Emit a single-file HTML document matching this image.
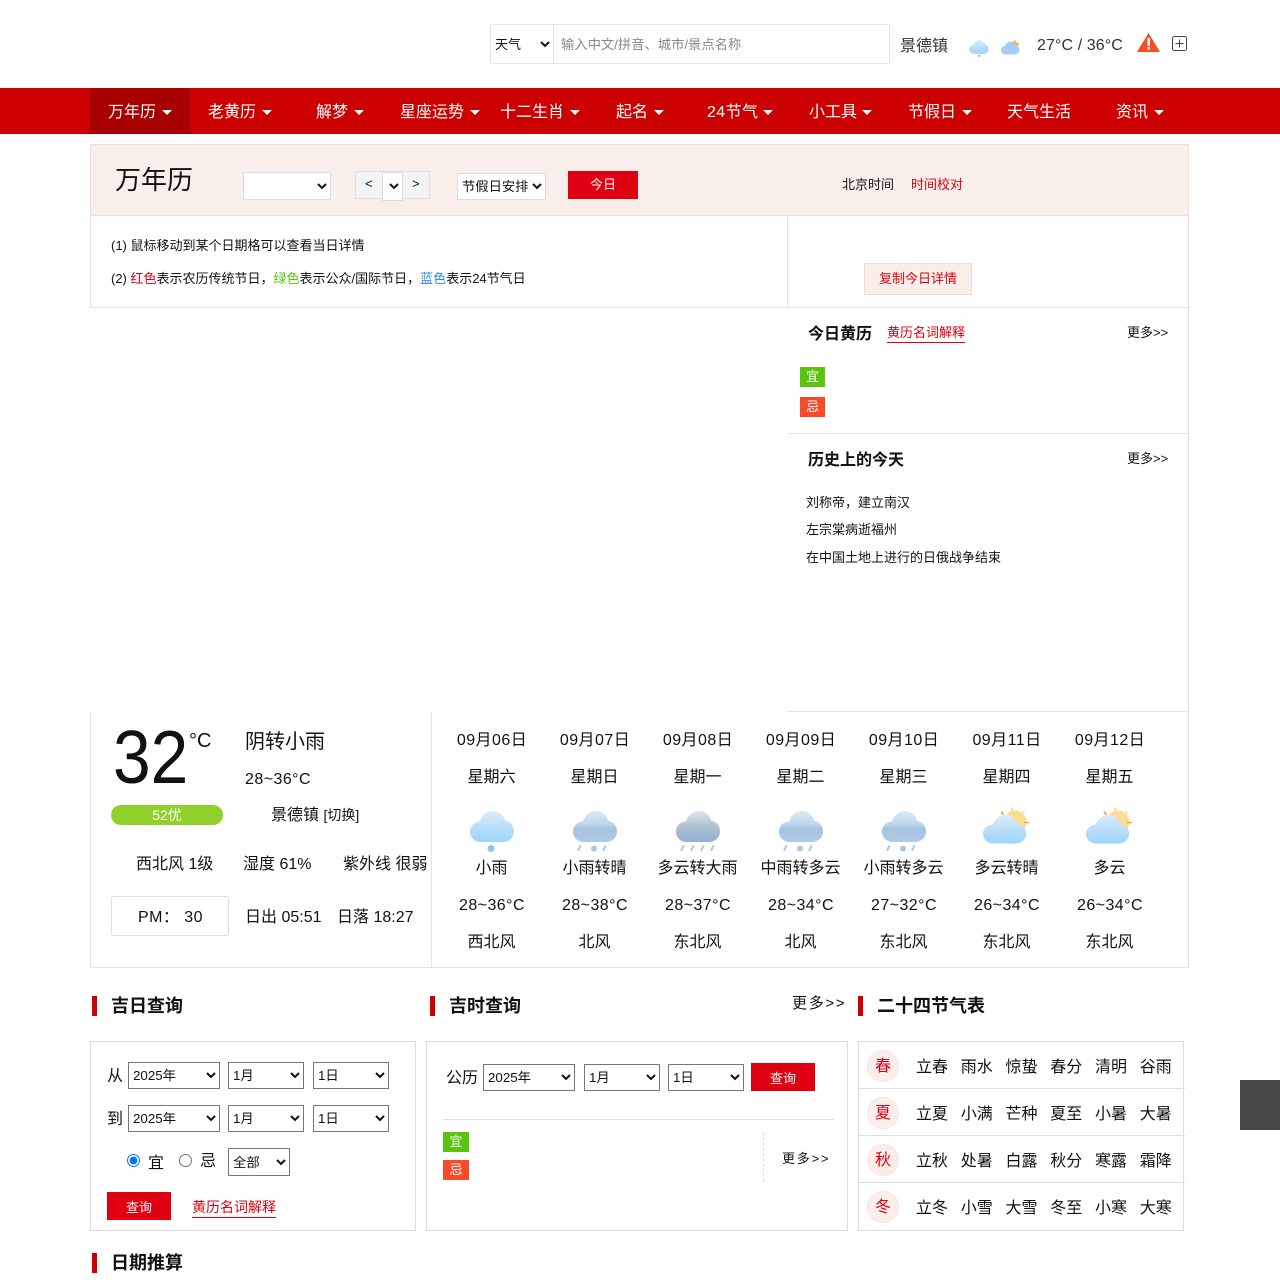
<!DOCTYPE html>
<html lang="zh-CN"><head><meta charset="utf-8"><title>万年历</title>
<style>
html,body{margin:0;padding:0;background:#fff}
body{position:relative;width:1280px;height:1280px;overflow:hidden;font-family:"WenQuanYi Zen Hei","Liberation Sans","Noto Sans CJK SC",sans-serif;color:#111;font-size:16px}
.t{position:absolute;white-space:nowrap;line-height:20px}
.b{position:absolute;box-sizing:border-box}
.c{position:absolute;white-space:nowrap;line-height:20px;text-align:center;width:103px}
.ls{letter-spacing:.45px}
.c.ls{text-indent:1px}
.n{color:#fff;top:104px;line-height:18px}
.car{position:absolute;top:110px;width:0;height:0;border-left:5px solid transparent;border-right:5px solid transparent;border-top:5px solid #fff}
.s13{font-size:13px}
select{position:absolute;box-sizing:border-box;font-family:"Liberation Sans","WenQuanYi Zen Hei",sans-serif;font-size:13.33px;color:#111;background:#fff;margin:0}
.h{font-weight:bold;font-size:18px}
.bar{position:absolute;width:5px;height:20px;background:#cc0000}
.red{position:absolute;background:#df0011;color:#fff;text-align:center;font-size:13px}
.tag{position:absolute;color:#fff;text-align:center;font-size:13px;line-height:20px;height:20px}
.g{background:#5ac40f}.o{background:#fa4a2c}
.circ{position:absolute;left:867px;width:32px;height:32px;box-sizing:border-box;border-radius:50%;background:#faeeeb;border:1px dotted #f3d8d8;color:#df0011;text-align:center;line-height:32px;font-size:16px}
.row{word-spacing:8.3px}
svg{position:absolute}
</style></head><body>
<svg width="0" height="0" style="left:0;top:0"><defs>
<linearGradient id="a" x1="0" y1="0" x2="0" y2="1"><stop offset="0" stop-color="#dcebf8"/><stop offset=".6" stop-color="#b5dcfb"/><stop offset="1" stop-color="#9ad6ff"/></linearGradient>
<linearGradient id="m" x1="0" y1="0" x2="0" y2="1"><stop offset="0" stop-color="#dce9f5"/><stop offset=".45" stop-color="#b9d6f0"/><stop offset=".55" stop-color="#a9c3dc"/><stop offset="1" stop-color="#abcbe8"/></linearGradient>
<linearGradient id="d" x1="0" y1="0" x2="0" y2="1"><stop offset="0" stop-color="#dde7f1"/><stop offset=".5" stop-color="#b0bfd0"/><stop offset="1" stop-color="#8fb0d6"/></linearGradient>
<path id="cl" d="M11 31C4 31 0 26 0 20.500C0 14.500 5 10.500 10 10.500C12 4 17 0 23 0C29 0 33.500 4 35 9.500C40 10.500 44 14.500 44 20.500C44 26.500 39 31 33 31Z"/>
<g id="drop3" fill="#aac8e6"><path d="M6.500 34.500q2-1 2 .5l-2.500 5q-2 .5-1.500-1.500Z"/><circle cx="21" cy="37.500" r="3"/><path d="M31.500 34.500q2-1 2 .5l-2.500 5q-2 .5-1.500-1.500Z"/></g>
<g id="sunny">
<circle cx="32" cy="17" r="11.500" fill="#fbdc94"/>
<path d="M28.800 2.500l.8 3.500" stroke="#fbd98c" stroke-width="2" fill="none"/>
<path d="M18 7l2.500 2.500" stroke="#f9a93c" stroke-width="2" fill="none"/>
<path d="M41 6.500l-2.500 3" stroke="#fbe0a0" stroke-width="2.500" fill="none"/>
<path d="M41 17.500h5" stroke="#f9a93c" stroke-width="1.500" fill="none"/>
<use href="#cl" transform="translate(0 10) scale(.98 .92)" fill="url(#a)"/>
</g>
</defs></svg>

<!-- header search -->
<div class="b" style="left:490px;top:24px;width:400px;height:40px;border:1px solid #e6e6e6"></div>
<div class="b" style="left:553px;top:24px;width:1px;height:40px;background:#e6e6e6"></div>
<select style="left:491px;top:25px;width:62px;height:38px;border:0;font-size:13px;background:transparent"><option>天气</option></select>
<div class="t" style="left:561px;top:35px;color:#888;font-size:13.300px">输入中文/拼音、城市/景点名称</div>
<div class="t" style="left:900px;top:37px;color:#333">景德镇</div>
<svg style="left:969px;top:40px" width="20" height="17" viewBox="0 0 44 38"><use href="#cl" fill="url(#a)"/><circle cx="22" cy="35" r="3" fill="#9ccbed"/></svg>
<svg style="left:1001px;top:39px" width="20" height="16" viewBox="0 -6 48 38"><path d="M24 3l10-7 3 6 7 1-3 9Z" fill="#f8b455"/><use href="#cl" fill="#a3cdf2"/></svg>
<div class="t" style="left:1037px;top:36px;color:#333;letter-spacing:.1px">27°C / 36°C</div>
<svg style="left:1137px;top:33px" width="23" height="19" viewBox="0 0 23 19"><path d="M11.500 0L23 19H0Z" fill="#f64e22"/><rect x="10.500" y="5" width="2.500" height="8" fill="#fff"/><rect x="10.500" y="14" width="2.500" height="2.500" fill="#fff"/></svg>
<svg style="left:1172px;top:36px" width="15" height="15" viewBox="0 0 15 15"><rect x=".5" y=".5" width="14" height="14" rx="2" fill="none" stroke="#444"/><path d="M3.500 7.500h8M7.500 3.500v8" stroke="#444" fill="none"/></svg>

<!-- nav -->
<div class="b" style="left:0;top:88px;width:1280px;height:46px;background:#cc0000"></div>
<div class="b" style="left:90px;top:88px;width:100px;height:46px;background:#a80000"></div>
<div class="t n" style="left:108px">万年历</div><i class="car" style="left:162px"></i>
<div class="t n" style="left:208px">老黄历</div><i class="car" style="left:262px"></i>
<div class="t n" style="left:316px">解梦</div><i class="car" style="left:354px"></i>
<div class="t n" style="left:400px">星座运势</div><i class="car" style="left:470px"></i>
<div class="t n" style="left:500px">十二生肖</div><i class="car" style="left:570px"></i>
<div class="t n" style="left:616px">起名</div><i class="car" style="left:654px"></i>
<div class="t n" style="left:707px;letter-spacing:.4px">24节气</div><i class="car" style="left:763px"></i>
<div class="t n" style="left:809px">小工具</div><i class="car" style="left:862px"></i>
<div class="t n" style="left:908px">节假日</div><i class="car" style="left:962px"></i>
<div class="t n" style="left:1007px">天气生活</div>
<div class="t n" style="left:1116px">资讯</div><i class="car" style="left:1154px"></i>

<!-- calendar head -->
<div class="b" style="left:90px;top:144px;width:1099px;height:72px;background:#faeeeb;border:1px solid #f3dcdc"></div>
<div class="t" style="left:115px;top:165px;font-size:26px;line-height:30px">万年历</div>
<select style="left:243px;top:172px;width:88px;height:28px;border:1px solid #ddd;border-radius:0"><option></option></select>
<div class="b" style="left:355px;top:171px;width:75px;height:28px;background:#f2f3f5;border:1px solid #e0e0e0"></div>
<div class="t s13" style="left:365px;top:174px">&lt;</div><div class="t s13" style="left:412px;top:174px">&gt;</div>
<select style="left:382px;top:172px;width:21px;height:29px;border:1px solid #ddd;border-radius:0;padding:0"><option></option></select>
<select style="left:457px;top:173px;width:89px;height:27px;border:1px solid #ddd;border-radius:0;font-size:13.300px"><option>节假日安排</option></select>
<div class="red" style="left:568px;top:171px;width:70px;height:28px;line-height:27px">今日</div>
<div class="t s13" style="left:842px;top:175px">北京时间</div>
<div class="t s13" style="left:911px;top:175px;color:#df0011">时间校对</div>

<!-- borders main -->
<div class="b" style="left:90px;top:216px;width:1px;height:92px;background:#f3dcdc"></div>
<div class="b" style="left:787px;top:216px;width:1px;height:92px;background:#f3dcdc"></div>
<div class="b" style="left:1188px;top:216px;width:1px;height:752px;background:#f3dcdc"></div>
<div class="b" style="left:90px;top:307px;width:1099px;height:1px;background:#f3dcdc"></div>

<div class="t s13" style="left:111px;top:236px">(1) 鼠标移动到某个日期格可以查看当日详情</div>
<div class="t s13" style="left:111px;top:269px">(2) <span style="color:#df0011">红色</span>表示农历传统节日，<span style="color:#5ac40f">绿色</span>表示公众/国际节日，<span style="color:#2e8be6">蓝色</span>表示24节气日</div>
<div class="b s13" style="left:864px;top:263px;width:108px;height:32px;background:#faeeeb;border:1px solid #f5d9d9;color:#df0011;text-align:center;line-height:29px">复制今日详情</div>

<!-- almanac -->
<div class="t" style="left:808px;top:325px;font-weight:bold;font-size:16px">今日黄历</div>
<div class="t s13" style="left:887px;top:323px;color:#df0011;border-bottom:1px solid #df0011;line-height:19px">黄历名词解释</div>
<div class="t s13" style="left:1127px;top:323px">更多&gt;&gt;</div>
<div class="tag g" style="left:800px;top:367px;width:25px">宜</div>
<div class="tag o" style="left:800px;top:397px;width:25px">忌</div>
<div class="b" style="left:788px;top:433px;width:400px;height:1px;background:#f3dcdc"></div>
<div class="t" style="left:808px;top:451px;font-weight:bold;font-size:16px">历史上的今天</div>
<div class="t s13" style="left:1127px;top:449px">更多&gt;&gt;</div>
<div class="t" style="left:806px;top:493px;font-size:13px">刘称帝，建立南汉</div>
<div class="t" style="left:806px;top:520px;font-size:13px">左宗棠病逝福州</div>
<div class="t" style="left:806px;top:548px;font-size:13px">在中国土地上进行的日俄战争结束</div>

<!-- weather -->
<div class="b" style="left:788px;top:711px;width:401px;height:1px;background:#f3dcdc"></div>
<div class="b" style="left:90px;top:712px;width:1px;height:256px;background:#f3dcdc"></div>
<div class="b" style="left:431px;top:712px;width:1px;height:256px;background:#f3dcdc"></div>
<div class="b" style="left:90px;top:967px;width:1099px;height:1px;background:#f3dcdc"></div>

<div class="t" style="left:113px;top:720px;font-size:72px;line-height:72px;transform:scale(.94,1.05);transform-origin:0 0">32</div>
<div class="t" style="left:189px;top:731px;font-size:20px">°C</div>
<div class="t" style="left:245px;top:732px;font-size:20px">阴转小雨</div>
<div class="t ls" style="left:245px;top:770px">28~36°C</div>
<div class="b" style="left:111px;top:805px;width:112px;height:20px;border-radius:10px;background:#8fd12a;color:#fff;text-align:center;font-size:14px;line-height:20px">52优</div>
<div class="t" style="left:271px;top:805px">景德镇 <span style="font-size:14px">[切换]</span></div>
<div class="t" style="left:136px;top:855px">西北风 1级</div>
<div class="t" style="left:243px;top:855px">湿度 61%</div>
<div class="t" style="left:343px;top:855px">紫外线 很弱</div>
<div class="b" style="left:111px;top:896px;width:118px;height:40px;border:1px solid #ddd;border-radius:3px"></div>
<div class="t ls" style="left:138px;top:908px">PM： 30</div>
<div class="t" style="left:245px;top:908px">日出 05:51</div>
<div class="t" style="left:337px;top:908px">日落 18:27</div>

<div class="c ls" style="left:440px;top:731px">09月06日</div><div class="c ls" style="left:543px;top:731px">09月07日</div><div class="c ls" style="left:646px;top:731px">09月08日</div><div class="c ls" style="left:749px;top:731px">09月09日</div><div class="c ls" style="left:852px;top:731px">09月10日</div><div class="c ls" style="left:955px;top:731px">09月11日</div><div class="c ls" style="left:1058px;top:731px">09月12日</div>
<div class="c" style="left:440px;top:768px">星期六</div><div class="c" style="left:543px;top:768px">星期日</div><div class="c" style="left:646px;top:768px">星期一</div><div class="c" style="left:749px;top:768px">星期二</div><div class="c" style="left:852px;top:768px">星期三</div><div class="c" style="left:955px;top:768px">星期四</div><div class="c" style="left:1058px;top:768px">星期五</div>

<svg style="left:470px;top:811px" width="44" height="42" viewBox="0 0 44 42"><use href="#cl" fill="url(#a)"/><circle cx="21" cy="37.500" r="3.500" fill="#8fc3ea"/></svg>
<svg style="left:573px;top:811px" width="44" height="42" viewBox="0 0 44 42"><use href="#cl" fill="url(#m)"/><use href="#drop3"/></svg>
<svg style="left:676px;top:811px" width="44" height="42" viewBox="0 0 44 42"><use href="#cl" fill="url(#d)"/><g fill="#aac8e6"><path d="M6.500 34.500q2-1 2 .5l-2.500 5q-2 .5-1.500-1.500ZM16.500 34.500q2-1 2 .5l-2.500 5q-2 .5-1.500-1.500ZM26.500 34.500q2-1 2 .5l-2.500 5q-2 .5-1.500-1.500ZM36.500 34.500q2-1 2 .5l-2.500 5q-2 .5-1.500-1.500Z"/></g></svg>
<svg style="left:779px;top:811px" width="44" height="42" viewBox="0 0 44 42"><use href="#cl" fill="url(#m)"/><use href="#drop3"/></svg>
<svg style="left:882px;top:811px" width="44" height="42" viewBox="0 0 44 42"><use href="#cl" fill="url(#m)"/><use href="#drop3"/></svg>
<svg style="left:983px;top:805px" width="50" height="40" viewBox="0 0 50 40"><use href="#sunny"/></svg>
<svg style="left:1086px;top:805px" width="50" height="40" viewBox="0 0 50 40"><use href="#sunny"/></svg>

<div class="c" style="left:440px;top:859px">小雨</div><div class="c" style="left:543px;top:859px">小雨转晴</div><div class="c" style="left:646px;top:859px">多云转大雨</div><div class="c" style="left:749px;top:859px">中雨转多云</div><div class="c" style="left:852px;top:859px">小雨转多云</div><div class="c" style="left:955px;top:859px">多云转晴</div><div class="c" style="left:1058px;top:859px">多云</div>
<div class="c ls" style="left:440px;top:896px">28~36°C</div><div class="c ls" style="left:543px;top:896px">28~38°C</div><div class="c ls" style="left:646px;top:896px">28~37°C</div><div class="c ls" style="left:749px;top:896px">28~34°C</div><div class="c ls" style="left:852px;top:896px">27~32°C</div><div class="c ls" style="left:955px;top:896px">26~34°C</div><div class="c ls" style="left:1058px;top:896px">26~34°C</div>
<div class="c" style="left:440px;top:933px">西北风</div><div class="c" style="left:543px;top:933px">北风</div><div class="c" style="left:646px;top:933px">东北风</div><div class="c" style="left:749px;top:933px">北风</div><div class="c" style="left:852px;top:933px">东北风</div><div class="c" style="left:955px;top:933px">东北风</div><div class="c" style="left:1058px;top:933px">东北风</div>

<!-- lower sections -->
<i class="bar" style="left:92px;top:996px"></i><div class="t h" style="left:111px;top:996px">吉日查询</div>
<i class="bar" style="left:430px;top:996px"></i><div class="t h" style="left:449px;top:996px">吉时查询</div>
<div class="t" style="left:792px;top:994px;font-size:15px;letter-spacing:1.700px">更多&gt;&gt;</div>
<i class="bar" style="left:858px;top:996px"></i><div class="t h" style="left:877px;top:996px">二十四节气表</div>

<!-- box 1 -->
<div class="b" style="left:90px;top:1041px;width:326px;height:190px;border:1px solid #ddd"></div>
<div class="t" style="left:107px;top:1067px">从</div>
<select style="left:128px;top:1062px;width:92px;height:27px"><option>2025年</option></select>
<select style="left:228px;top:1062px;width:76px;height:27px"><option>1月</option></select>
<select style="left:313px;top:1062px;width:76px;height:27px"><option>1日</option></select>
<div class="t" style="left:107px;top:1110px">到</div>
<select style="left:128px;top:1105px;width:92px;height:27px"><option>2025年</option></select>
<select style="left:228px;top:1105px;width:76px;height:27px"><option>1月</option></select>
<select style="left:313px;top:1105px;width:76px;height:27px"><option>1日</option></select>
<input type="radio" name="r" checked style="position:absolute;left:127px;top:1154px;width:13px;height:13px;margin:0">
<div class="t" style="left:148px;top:1154px">宜</div>
<input type="radio" name="r" style="position:absolute;left:179px;top:1154px;width:13px;height:13px;margin:0">
<div class="t" style="left:200px;top:1152px">忌</div>
<select style="left:228px;top:1148px;width:62px;height:28px;border:1px solid #767676;border-radius:0"><option>全部</option></select>
<div class="red" style="left:107px;top:1192px;width:64px;height:28px;line-height:31px">查询</div>
<div class="t" style="left:192px;top:1198px;color:#df0011;border-bottom:1px solid #df0011;line-height:19px;font-size:14px">黄历名词解释</div>

<!-- box 2 -->
<div class="b" style="left:426px;top:1041px;width:422px;height:190px;border:1px solid #ddd"></div>
<div class="t" style="left:446px;top:1069px">公历</div>
<select style="left:483px;top:1064px;width:92px;height:27px"><option>2025年</option></select>
<select style="left:584px;top:1064px;width:76px;height:27px"><option>1月</option></select>
<select style="left:668px;top:1064px;width:76px;height:27px"><option>1日</option></select>
<div class="red" style="left:751px;top:1063px;width:64px;height:28px;line-height:31px">查询</div>
<div class="b" style="left:443px;top:1119px;width:391px;height:1px;background:#ddd"></div>
<div class="tag g" style="left:443px;top:1132px;width:26px">宜</div>
<div class="tag o" style="left:443px;top:1160px;width:26px">忌</div>
<div class="b" style="left:763px;top:1132px;width:0;height:50px;border-left:1px dashed #ddd"></div>
<div class="t s13" style="left:782px;top:1149px;letter-spacing:1.800px">更多&gt;&gt;</div>

<!-- box 3 -->
<div class="b" style="left:858px;top:1041px;width:326px;height:190px;border:1px solid #ddd"></div>
<div class="b" style="left:859px;top:1088px;width:326px;height:1px;background:#ddd"></div>
<div class="b" style="left:859px;top:1135px;width:326px;height:1px;background:#ddd"></div>
<div class="b" style="left:859px;top:1182px;width:326px;height:1px;background:#ddd"></div>
<div class="circ" style="top:1050px">春</div><div class="circ" style="top:1097px">夏</div><div class="circ" style="top:1144px">秋</div><div class="circ" style="top:1191px">冬</div>
<div class="t row" style="left:916px;top:1058px">立春 雨水 惊蛰 春分 清明 谷雨</div>
<div class="t row" style="left:916px;top:1105px">立夏 小满 芒种 夏至 小暑 大暑</div>
<div class="t row" style="left:916px;top:1152px">立秋 处暑 白露 秋分 寒露 霜降</div>
<div class="t row" style="left:916px;top:1199px">立冬 小雪 大雪 冬至 小寒 大寒</div>

<div class="b" style="left:1240px;top:1080px;width:40px;height:50px;background:#484848"></div>

<i class="bar" style="left:92px;top:1253px"></i><div class="t h" style="left:111px;top:1253px">日期推算</div>
</body></html>
